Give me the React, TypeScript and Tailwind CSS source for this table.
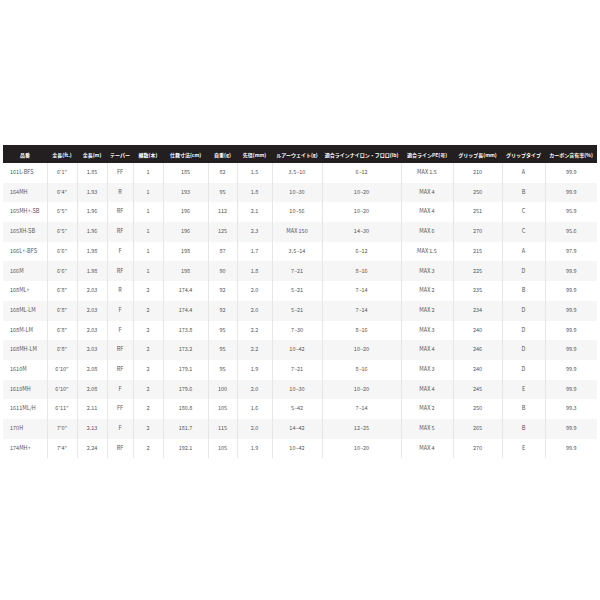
const headers = [
  "品番",
  "全長(ft.)",
  "全長(m)",
  "テーパー",
  "継数(本)",
  "仕舞寸法(cm)",
  "自重(g)",
  "先径(mm)",
  "ルアーウェイト(g)",
  "適合ラインナイロン・フロロ(lb)",
  "適合ラインPE(号)",
  "グリップ長(mm)",
  "グリップタイプ",
  "カーボン含有率(%)",
];

const widths = [44, 30, 30, 26, 30, 45, 29, 35, 50, 79, 52, 49, 43, 52];

const rows: string[][] = [
  ["161L-BFS", "6'1\"", "1.85", "FF", "1", "185", "82", "1.5", "3.5~10", "6~12", "MAX 1.5", "210", "A", "99.9"],
  ["164MH", "6'4\"", "1.93", "R", "1", "193", "95", "1.8", "10~30", "10~20", "MAX 4", "250", "B", "99.9"],
  ["165MH+-SB", "6'5\"", "1.96", "RF", "1", "196", "112", "2.1", "10~56", "10~20", "MAX 4", "251", "C", "95.9"],
  ["165XH-SB", "6'5\"", "1.96", "RF", "1", "196", "125", "2.3", "MAX 150", "14~30", "MAX 6", "270", "C", "95.6"],
  ["166L+-BFS", "6'6\"", "1.98", "F", "1", "198", "87", "1.7", "3.5~14", "6~12", "MAX 1.5", "215", "A", "97.9"],
  ["166M", "6'6\"", "1.98", "RF", "1", "198", "90", "1.8", "7~21", "8~16", "MAX 3", "225", "D", "99.9"],
  ["168ML+", "6'8\"", "2.03", "R", "2", "174.4", "92", "2.0", "5~21", "7~14", "MAX 2", "235", "B", "99.9"],
  ["168ML-LM", "6'8\"", "2.03", "F", "2", "174.4", "92", "2.0", "5~21", "7~14", "MAX 2", "234", "D", "99.9"],
  ["168M-LM", "6'8\"", "2.03", "F", "2", "173.8", "95", "2.2", "7~30", "8~16", "MAX 3", "240", "D", "99.9"],
  ["168MH-LM", "6'8\"", "2.03", "RF", "2", "173.2", "95", "2.2", "10~42", "10~20", "MAX 4", "246", "D", "99.9"],
  ["1610M", "6'10\"", "2.08", "RF", "2", "179.1", "95", "1.9", "7~21", "8~16", "MAX 3", "240", "D", "99.9"],
  ["1610MH", "6'10\"", "2.08", "F", "2", "179.6", "100", "2.0", "10~30", "10~20", "MAX 4", "245", "E", "99.9"],
  ["1611ML/H", "6'11\"", "2.11", "FF", "2", "180.8", "105", "1.6", "5~42", "7~14", "MAX 2", "250", "B", "99.3"],
  ["170H", "7'0\"", "2.13", "F", "2", "181.7", "115", "2.0", "14~42", "12~25", "MAX 5", "265", "B", "99.9"],
  ["174MH+", "7'4\"", "2.24", "RF", "2", "192.1", "105", "1.9", "10~42", "10~20", "MAX 4", "270", "E", "99.9"],
];

export default function App() {
  return (
    <div className="w-[600px] h-[600px] bg-white pt-[145px] px-[3px] font-['Noto_Sans_CJK_JP',sans-serif]">
      <table className="w-[594px] table-fixed border-collapse">
        <colgroup>
          {widths.map((w, i) => (
            <col key={i} style={{ width: w }} />
          ))}
        </colgroup>
        <thead>
          <tr className="h-[18px] bg-[#231f20]">
            {headers.map((h, i) => (
              <th
                key={i}
                className="p-0 text-center text-[5px] font-bold text-white whitespace-nowrap leading-none"
              >
                {h}
              </th>
            ))}
          </tr>
        </thead>
        <tbody>
          {rows.map((row, r) => (
            <tr key={r} className={r % 2 === 1 ? "h-[19.7px] bg-[#f6f6f6]" : "h-[19.7px] bg-white"}>
              {row.map((cell, c) => (
                <td
                  key={c}
                  className={
                    c === 0
                      ? "p-0 pl-[7px] text-left text-[5.5px] text-[#555] whitespace-nowrap leading-none border-r border-[#e6e6e6]"
                      : c === row.length - 1
                      ? "p-0 text-center text-[5.5px] text-[#555] whitespace-nowrap leading-none"
                      : "p-0 text-center text-[5.5px] text-[#555] whitespace-nowrap leading-none border-r border-[#e6e6e6]"
                  }
                >
                  {cell}
                </td>
              ))}
            </tr>
          ))}
        </tbody>
      </table>
    </div>
  );
}
